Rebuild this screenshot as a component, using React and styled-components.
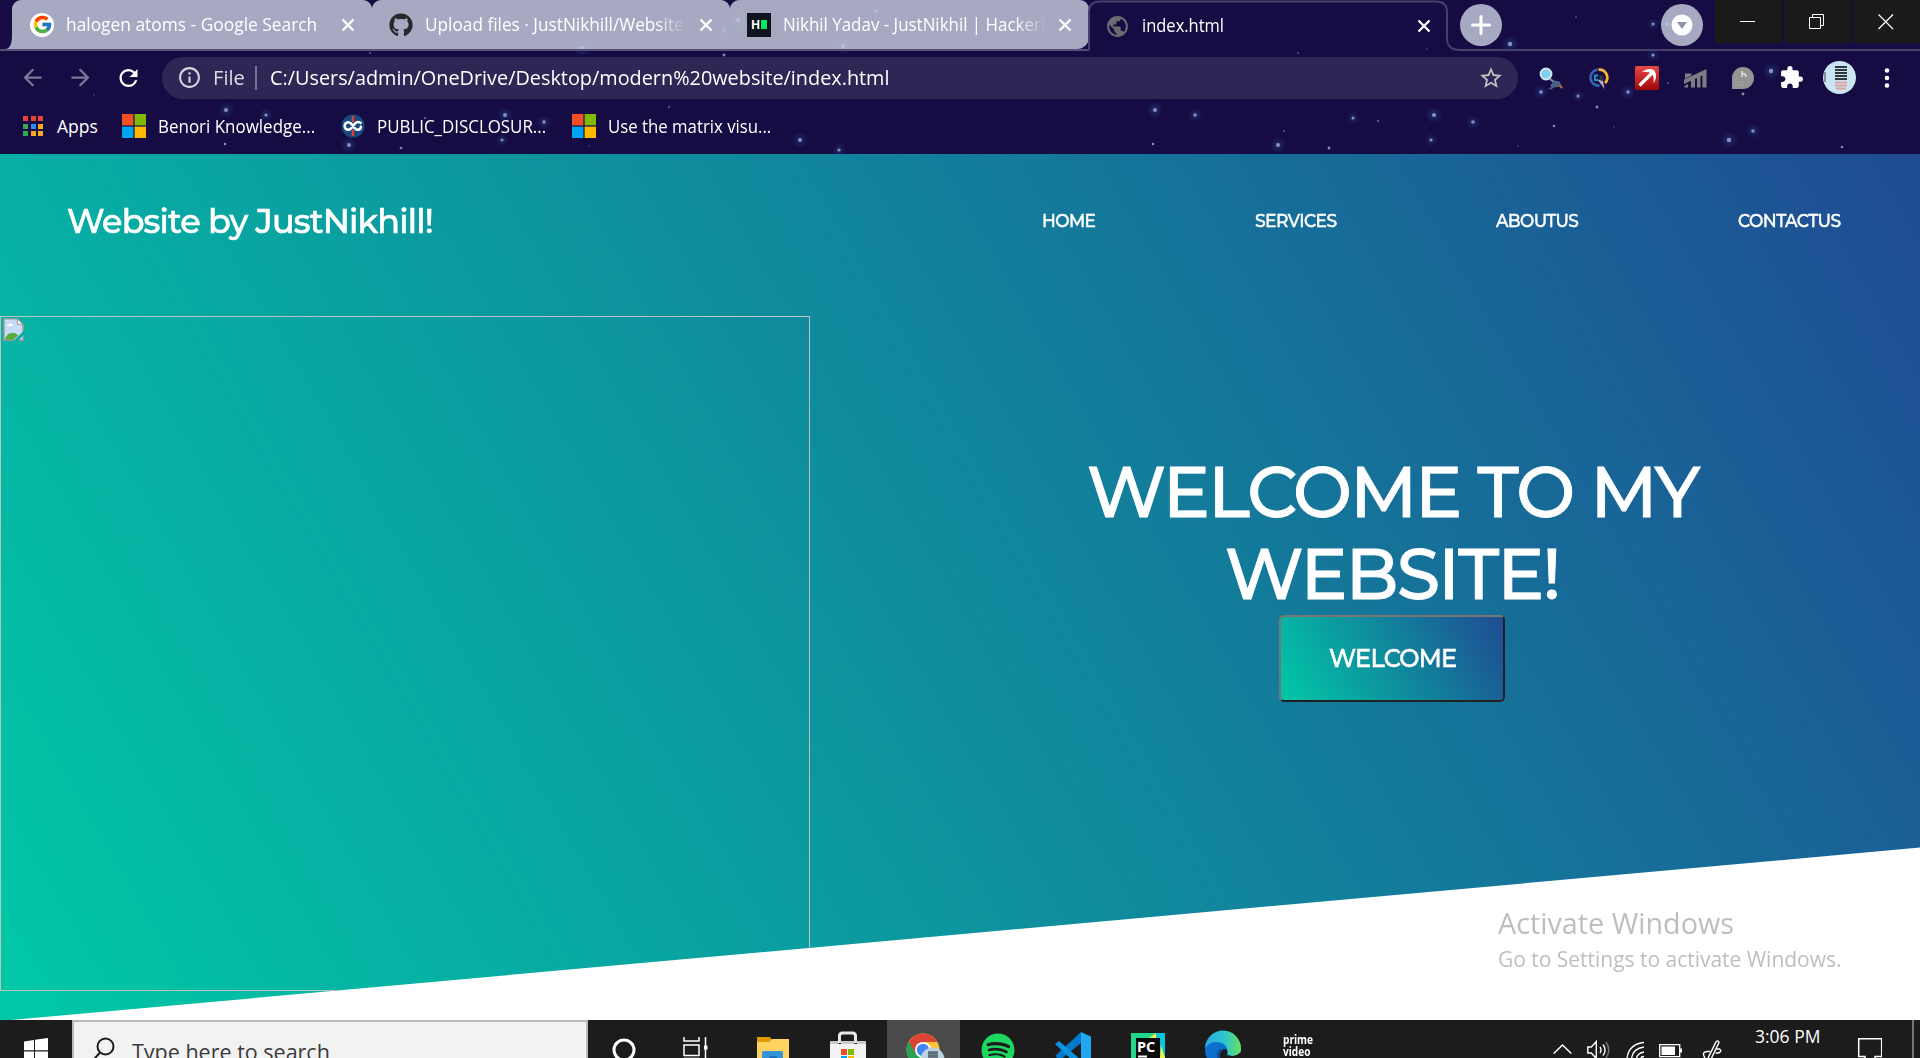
import React, { useLayoutEffect, useRef, useState } from "react";
import styled, { createGlobalStyle } from "styled-components";
import {
  MdArrowBack, MdArrowForward, MdRefresh, MdInfoOutline, MdStarBorder, MdExtension, MdPublic,
} from "react-icons/md";
import { FaGithub, FaSpotify } from "react-icons/fa";
import { FcGoogle } from "react-icons/fc";

const ui = `"Segoe UI", "Open Sans", "Noto Sans", sans-serif`;
const display = `Montserrat, Lato, "Open Sans", sans-serif`;
const brand = "linear-gradient(60deg, #00c9a7, #1f4b93)";

const Global = createGlobalStyle`
  * { box-sizing: border-box; }
  body { margin: 0; background: #fff; font-family: ${ui}; overflow: hidden; }
`;

const Screen = styled.div`
  width: 1920px;
  height: 1058px;
  display: flex;
  flex-direction: column;
  overflow: hidden;
`;

/* Text squeezed or stretched to an exact width */
const FitBox = styled.span`
  display: block;
  flex: none;
  white-space: nowrap;
  font-family: ${(p) => p.$font || ui};
  font-size: ${(p) => p.$size}px;
  font-weight: ${(p) => p.$weight || 400};
  line-height: ${(p) => p.$line || p.$size * 1.3}px;
  letter-spacing: ${(p) => p.$track || 0}em;
  color: ${(p) => p.$color || "#fff"};
  margin-top: ${(p) => p.$drop || 0}px;
  -webkit-text-stroke: ${(p) => p.$stroke || 0}px currentColor;
`;
const FitInner = styled.span`
  display: inline-block;
  transform-origin: 0 50%;
`;
function Fit({ width, children, ...rest }) {
  const ref = useRef(null);
  const [scale, setScale] = useState(1);
  useLayoutEffect(() => {
    const measure = () => ref.current && setScale(width / ref.current.offsetWidth);
    measure();
    document.fonts?.ready.then(measure);
  }, [width]);
  return (
    <FitBox {...rest} style={{ width }}>
      <FitInner ref={ref} style={{ transform: `scaleX(${scale})` }}>{children}</FitInner>
    </FitBox>
  );
}

/* ---------- Browser frame ---------- */
const Browser = styled.header`
  position: relative;
  height: 154px;
  flex: none;
  background: #160c43;
  isolation: isolate;
`;
const Sky = styled.svg`
  position: absolute;
  inset: 0;
  z-index: -1;
`;
const stars = [
  [226, 110, 2], [266, 115, 1.6], [94, 95, 0.8], [225, 144, 1.3], [349, 145, 2], [401, 148, 1.3], [505, 115, 2],
  [544, 122, 1.7], [502, 140, 1.5], [425, 118, 1.2], [589, 146, 0.8], [370, 53, 1], [582, 48, 2], [738, 20, 2],
  [724, 30, 1.6], [876, 11, 1.6], [916, 11, 1.1], [843, 46, 2], [724, 55, 1.4], [669, 107, 1.2], [800, 140, 2],
  [839, 150, 1.6], [1155, 110, 2], [1195, 115, 1.7], [1153, 144, 1.3], [1278, 145, 2], [1284, 131, 1.1],
  [1353, 118, 1.5], [1378, 121, 1.2], [1434, 115, 2.1], [1473, 122, 1.8], [1431, 140, 1.6], [1329, 148, 1.4],
  [1554, 126, 1.3], [1614, 127, 0.8], [1518, 146, 0.8], [1842, 147, 1.3], [1753, 131, 1.8], [1729, 140, 2.2],
  [1771, 71, 2.2], [1743, 94, 1.4], [1628, 92, 1.8], [1597, 107, 1.4], [1578, 96, 1.5], [1541, 92, 1.8],
  [1510, 44, 2.2], [1576, 17, 0.9], [1653, 24, 1.5], [1667, 24, 2], [1653, 55, 1.6], [1668, 83, 1], [1298, 53, 0.9],
  [1427, 49, 0.8],
];

const TabStrip = styled.div`
  height: 51px;
  display: flex;
  align-items: stretch;
`;
const TabGroup = styled.div`
  display: flex;
  width: 1089px;
  padding-left: 12px;
  border-bottom: 2px solid #56507a;
`;
const Tab = styled.div`
  position: relative;
  display: flex;
  align-items: center;
  width: ${(p) => p.$w}px;
  padding: 0 16px 0 ${(p) => p.$pad}px;
  background: rgba(191, 196, 215, 0.86);
  border-radius: 9px 9px ${(p) => (p.$last ? 12 : 0)}px 0;
  & + &::before {
    content: "";
    position: absolute;
    left: -1px;
    top: 11px;
    width: 2px;
    height: 30px;
    background: #fff;
  }
`;
const Flare = styled.svg`
  position: absolute;
  left: -7px;
  bottom: 0;
`;
const ActiveTab = styled.div`
  position: relative;
  width: 371px;
  display: flex;
  align-items: center;
  padding-left: 16px;
`;
const Outline = styled.svg`
  position: absolute;
  left: -1px;
  top: 0;
`;
const StripTail = styled.div`
  flex: 1;
  display: flex;
  border-bottom: 2px solid #46406c;
`;
const Favicon = styled.span`
  display: grid;
  place-items: center;
  flex: none;
  width: 24px;
  height: 24px;
  margin-right: ${(p) => p.$gap}px;
  border-radius: ${(p) => (p.$square ? 0 : "50%")};
  background: ${(p) => p.$bg || "transparent"};
`;
const HackerMark = styled.span`
  display: flex;
  align-items: center;
  gap: 1px;
  font: 900 12px/1 "Liberation Sans", sans-serif;
  color: #fff;
  &::after {
    content: "";
    width: 6px;
    height: 9px;
    background: #00ea64;
  }
`;
const TabTitle = styled.div`
  width: ${(p) => p.$w}px;
  overflow: hidden;
  flex: none;
  ${(p) => p.$fade && "mask-image: linear-gradient(90deg, #000 88%, transparent 100%);"}
`;
const CloseIcon = styled.svg`
  margin-left: auto;
  flex: none;
  width: 16px;
  margin-right: ${(p) => p.$right || 0}px;
`;
const RoundButton = styled.button`
  display: grid;
  place-items: center;
  flex: none;
  width: 42px;
  height: 42px;
  margin: 4px ${(p) => p.$right || 0}px 0 0;
  padding: 0;
  border: 0;
  border-radius: 50%;
  background: rgba(191, 196, 215, 0.86);
`;
const WindowButtons = styled.div`
  display: flex;
  gap: 2px;
  height: 43px;
`;
const WindowButton = styled.div`
  display: grid;
  place-items: center;
  width: 67px;
  padding-right: 1px;
  background: #1a1a1a;
`;

const Toolbar = styled.div`
  height: 53px;
  display: flex;
  align-items: center;
  padding-left: 19px;
`;
const NavIcon = styled.span`
  display: flex;
  width: 27px;
  margin-right: ${(p) => p.$gap}px;
  color: ${(p) => (p.$on ? "#fff" : "#7d7798")};
`;
const Omnibox = styled.div`
  width: 1356px;
  height: 42px;
  display: flex;
  align-items: center;
  padding: 0 14px 0 15px;
  margin-right: 21px;
  border-radius: 21px;
  background: #2e2655;
  color: #d8d6e2;
`;
const Scheme = styled.span`
  margin-left: 11px;
`;
const Divider = styled.span`
  width: 2px;
  height: 24px;
  margin: 0 13px 0 10px;
  background: #77728f;
`;
const Push = styled.span`
  margin-left: auto;
  display: flex;
`;
const Extensions = styled.div`
  display: flex;
  align-items: center;
  gap: 24px;
`;
const Profile = styled.svg`
  margin: 0 0 0 -5px;
`;
const Bookmarks = styled.nav`
  height: 50px;
  display: flex;
  align-items: center;
  padding-left: 23px;
  padding-bottom: 6px;
`;
const Bookmark = styled.a`
  display: flex;
  align-items: center;
  gap: ${(p) => p.$gap || 12}px;
  margin-right: ${(p) => p.$right}px;
`;
const AppsGrid = styled.span`
  display: grid;
  grid-template-columns: repeat(3, 5px);
  gap: 2.5px;
  i { width: 5px; height: 5px; }
`;
const Dot = styled.i`
  background: ${(p) => p.$c};
`;

const Cross = ({ right }) => (
  <CloseIcon $right={right} viewBox="0 0 16 16">
    <path d="M2.500 2.500l11 11M13.500 2.500l-11 11" stroke="#fff" strokeWidth="2.300" />
  </CloseIcon>
);
const MsLogo = () => (
  <svg width="24" height="24">
    <path fill="#f25022" d="M0 0h11.4v11.4H0z" /><path fill="#7fba00" d="M12.6 0H24v11.4H12.6z" />
    <path fill="#00a4ef" d="M0 12.6h11.4V24H0z" /><path fill="#ffb900" d="M12.6 12.6H24V24H12.6z" />
  </svg>
);

function BrowserFrame() {
  return (
    <Browser>
      <Sky width="1920" height="154">
        <defs>
          <radialGradient id="glow">
            <stop offset="0" stopColor="#2f5bab" stopOpacity=".4" />
            <stop offset="1" stopColor="#2553a0" stopOpacity="0" />
          </radialGradient>
        </defs>
        {stars.map(([x, y, r], i) => (
          <g key={i}>
            {r > 1.4 && <circle cx={x} cy={y} r={r * 4.2} fill="url(#glow)" />}
            <circle cx={x} cy={y} r={r} fill="#a7aad6" opacity={r < 1.3 ? 0.45 : 0.78} />
          </g>
        ))}
      </Sky>
      <TabStrip>
        <TabGroup>
          <Tab $w={360} $pad={18}>
            <Flare width="7" height="14"><path d="M7 0Q7 14 0 14H7Z" fill="#a7abc0" /></Flare>
            <Favicon $gap={12} $bg="#fff"><FcGoogle size={21} /></Favicon>
            <TabTitle $w={252}><Fit $size={17.5} width={251}>halogen atoms - Google Search</Fit></TabTitle>
            <Cross />
          </Tab>
          <Tab $w={358} $pad={17}>
            <Favicon $gap={12}><FaGithub size={24} color="#24292e" /></Favicon>
            <TabTitle $w={262} $fade><Fit $size={17.5} width={264}>Upload files · JustNikhill/Website-</Fit></TabTitle>
            <Cross />
          </Tab>
          <Tab $w={359} $pad={17} $last>
            <Favicon $gap={12} $square $bg="#0e141e"><HackerMark>H</HackerMark></Favicon>
            <TabTitle $w={264} $fade><Fit $size={17.5} width={268}>Nikhil Yadav - JustNikhil | HackerR</Fit></TabTitle>
            <Cross />
          </Tab>
        </TabGroup>
        <ActiveTab>
          <Outline width="374" height="51">
            <path d="M1 50V12Q1 1.5 12 1.5H348Q359 1.5 359 12V38Q359 50 372 50" fill="none" stroke="#46406c" strokeWidth="2" />
          </Outline>
          <Favicon $gap={13}><MdPublic size={25} color="#6a6b70" /></Favicon>
          <Fit $size={17.5} width={82}>index.html</Fit>
          <Cross right={28} />
        </ActiveTab>
        <StripTail>
          <RoundButton $right={159}>
            <svg width="20" height="22"><path d="M10 2.500v17M1.500 11h17" stroke="#fff" strokeWidth="3" strokeLinecap="round" /></svg>
          </RoundButton>
          <RoundButton $right={12}>
            <svg width="22" height="22"><circle cx="11" cy="11" r="10.5" fill="#fff" /><path d="M6 8h10l-5 7z" fill="#8f91aa" /></svg>
          </RoundButton>
          <WindowButtons>
            <WindowButton><svg width="16" height="16"><path d="M0 7.5h15" stroke="#fff" /></svg></WindowButton>
            <WindowButton>
              <svg width="16" height="16"><path d="M.5 3.5h11v11H.5zM3.5 3.5v-3h11v11h-3" fill="none" stroke="#fff" /></svg>
            </WindowButton>
            <WindowButton><svg width="16" height="16"><path d="M.5.5l14.500 14.500M15 .5L.5 15" stroke="#fff" strokeWidth="1.2" /></svg></WindowButton>
          </WindowButtons>
        </StripTail>
      </TabStrip>

      <Toolbar>
        <NavIcon $gap={21}><MdArrowBack size={29} /></NavIcon>
        <NavIcon $gap={21}><MdArrowForward size={29} /></NavIcon>
        <NavIcon $gap={20} $on><MdRefresh size={30} /></NavIcon>
        <Omnibox>
          <MdInfoOutline size={25} />
          <Scheme><Fit $size={19.5} width={32} $color="#dddbe6">File</Fit></Scheme>
          <Divider />
          <Fit $size={20} width={620}>C:/Users/admin/OneDrive/Desktop/modern%20website/index.html</Fit>
          <Push><MdStarBorder size={26} color="#c5c1c4" /></Push>
        </Omnibox>
        <Extensions>
          <svg width="24" height="24">
            <path d="M10.500 12.500l5 4" stroke="#7c8fa8" strokeWidth="2" />
            <path d="M9 23l3-2-.5-2 4-4.500 5 1 2 4-4 1.500-4 .5-2 2z" fill="#4a5f86" />
            <circle cx="7" cy="8" r="5.500" fill="#7fd0f0" stroke="#d2e6ee" strokeWidth="1.800" /><path d="M20.500 19l2.500 3" stroke="#b5663a" strokeWidth="2.200" />
          </svg>
          <svg width="24" height="24">
            <path d="M10.500 3.700a8 8 0 0 0 2 15.900" fill="none" stroke="#3561ad" strokeWidth="2.800" />
            <path d="M11.500 3.600a8 8 0 0 1 6.500 13.500" fill="none" stroke="#f4b532" strokeWidth="2.800" />
            <path d="M11 9.500H8v4.500h3" fill="none" stroke="#159bd8" strokeWidth="1.800" /><path d="M12.500 9.500l3.500 4.500M16 9.500l-3.500 4.500" stroke="#3a3b4c" strokeWidth="1.500" />
            <path d="M10.500 13.500l7 9.500-1.500-8z" fill="#b4b2c0" />
          </svg>
          <svg width="24" height="24">
            <defs><linearGradient id="pick" x2="0" y2="1"><stop stopColor="#e8494a" /><stop offset="1" stopColor="#a00606" /></linearGradient></defs>
            <rect width="24" height="24" rx="1.500" fill="url(#pick)" /><path d="M4.500 19.500L17 7" stroke="#fff" strokeWidth="3.200" />
            <path d="M7 6Q13 1 19.500 4.500Q23 11 18.500 17.500Q19.500 10 16.500 7.500Q13 5 7 6Z" fill="#fff" />
          </svg>
          <svg width="24" height="24" fill="#7c7c82">
            <path d="M1 13.500L23.500 3v4.500L1 18zM1.500 20l3.500-2v3.500H1.500zM8 14.500l4-2v9H8zM14 11.500l3.500-1.500v11.500H14zM19.500 9l4-2v14.500h-4zM2 7.500h6.500v2L2 12.500z" />
          </svg>
          <svg width="24" height="24">
            <path d="M1 23V12A11 11 0 1 1 12 23Z" fill="#949494" /><path d="M11 5v6M11 8q4-1 4 3" stroke="#ddd" strokeWidth="1.600" fill="none" />
            <path d="M3 13h4M3 16h4M3 19h9M9 16h5" stroke="#a2a2a2" />
          </svg>
          <MdExtension size={25} color="#fff" />
          <Profile width="33" height="33">
            <circle cx="16.500" cy="16.500" r="16.500" fill="#cbe4f3" />
            <path d="M12 6h12M12 9h12M12 12h12M12 15h12M12 18h12" stroke="#30373d" strokeWidth="2" />
            <path d="M12 21.500h12M12 24.500h12M13 27.500h10" stroke="#dba39c" strokeWidth="1.800" /><path d="M2 11v10" stroke="#6b7680" strokeWidth="1.500" />
          </Profile>
          <svg width="14" height="20" fill="#fff"><circle cx="7" cy="2.500" r="2.300" /><circle cx="7" cy="10" r="2.300" /><circle cx="7" cy="17.500" r="2.300" /></svg>
        </Extensions>
      </Toolbar>

      <Bookmarks>
        <Bookmark $gap={14} $right={24}>
          <AppsGrid>
            {["#ea4335", "#ea4335", "#ea4335", "#34a853", "#2a8cf0", "#fbab17", "#34a853", "#fbab17", "#fbab17"].map((c, i) => <Dot key={i} $c={c} />)}
          </AppsGrid>
          <Fit $size={17.5} width={41}>Apps</Fit>
        </Bookmark>
        <Bookmark $right={26}><MsLogo /><Fit $size={17.5} width={157}>Benori Knowledge...</Fit></Bookmark>
        <Bookmark $right={26}>
          <svg width="24" height="24">
            <circle cx="12" cy="12" r="11.500" fill="#174a7c" /><path d="M12 2v6M12 16v6" stroke="#e33b3b" strokeWidth="2.500" />
            <path d="M20.500 9.500Q17 6.500 14 9.500L10 14.500Q7 17 4.500 14.500 2.800 12 4.500 9.500 7 7 10 9.500L14 14.500Q17 17 19.500 14.500 20.500 13 19 12" fill="none" stroke="#fff" strokeWidth="2.500" />
          </svg>
          <Fit $size={17.5} width={169}>PUBLIC_DISCLOSUR...</Fit>
        </Bookmark>
        <Bookmark $right={0}><MsLogo /><Fit $size={17.5} width={163}>Use the matrix visu...</Fit></Bookmark>
      </Bookmarks>
    </Browser>
  );
}

/* ---------- Web page ---------- */
const Page = styled.main`
  position: relative;
  height: 866px;
  flex: none;
  overflow: hidden;
  background: #fff;
`;
const Landing = styled.section`
  height: 867px;
  background: ${brand};
  clip-path: polygon(0 0, 100% 0, 100% 80%, 0 100%);
`;
const SiteHeader = styled.div`
  height: 162px;
  display: flex;
  align-items: center;
  justify-content: space-between;
  padding: 0 80px 28px 67px;
`;
const Menu = styled.div`
  display: flex;
  gap: 160px;
`;
const Hero = styled.div`
  display: flex;
`;
const MissingImage = styled.div`
  width: 810px;
  height: 675px;
  border: 1px solid #c0c0c0;
  padding: 1px 2px;
`;
const Copy = styled.div`
  flex: 1;
  display: flex;
  flex-direction: column;
  align-items: center;
  padding: 135px 0 0 54px;
`;
const WelcomeButton = styled.button`
  width: 226px;
  height: 87px;
  display: grid;
  place-items: center;
  padding: 0;
  border: 2px solid;
  border-color: #767676 #212121 #212121 #767676;
  border-radius: 5px;
  background: ${brand};
`;
const Watermark = styled.aside`
  position: absolute;
  left: 1498px;
  top: 750px;
`;

function WebPage() {
  return (
    <Page>
      <Landing>
        <SiteHeader>
          <Fit $font={display} $size={34} $weight={500} $stroke={0.6} $track={-0.025} width={366}>Website by JustNikhill!</Fit>
          <Menu>
            {[["HOME", 53], ["SERVICES", 81], ["ABOUTUS", 82], ["CONTACTUS", 102]].map(([t, w]) => (
              <Fit key={t} $font={display} $size={18} $weight={500} $stroke={0.4} $track={-0.035} $drop={1} width={w}>{t}</Fit>
            ))}
          </Menu>
        </SiteHeader>
        <Hero>
          <MissingImage>
            <svg width="21" height="24" viewBox="0 0 22 27" preserveAspectRatio="none">
              <path d="M1 1h14l6 6v18H1z" fill="#c6dbf7" stroke="#9a9a9a" strokeWidth="1.500" /><path d="M15 1v6h6z" fill="#fff" stroke="#8c8c8c" />
              <path d="M4 9q0-2 2-2 1-2 3 0 2 0 2 2z" fill="#fff" /><path d="M2 24.500q2-8 8-8 4 0 6 3l-5 5z" fill="#57ab3b" />
              <path d="M11 26L22 14v4l-6 8z" fill="#06aca5" />
            </svg>
          </MissingImage>
          <Copy>
            <Fit $font={display} $size={71} $line={82} $weight={500} $stroke={0.9} $track={-0.025} width={611}>WELCOME TO MY</Fit>
            <Fit $font={display} $size={71} $line={82} $weight={500} $stroke={0.9} $track={-0.025} width={334}>WEBSITE!</Fit>
            <WelcomeButton><Fit $font={display} $size={25} $weight={500} $stroke={0.5} $track={-0.03} width={127}>WELCOME</Fit></WelcomeButton>
          </Copy>
        </Hero>
      </Landing>
      <Watermark>
        <Fit $size={29} $line={38} width={236} $color="#bebebe">Activate Windows</Fit>
        <Fit $size={22} $line={32} width={343} $color="#bebebe">Go to Settings to activate Windows.</Fit>
      </Watermark>
    </Page>
  );
}

/* ---------- Taskbar ---------- */
const Taskbar = styled.footer`
  height: 38px;
  flex: none;
  display: flex;
  overflow: hidden;
  background: #1c1c1c;
`;
const Start = styled.div`
  width: 72px;
  padding: 18px 24px 0;
`;
const Search = styled.div`
  width: 516px;
  height: 60px;
  display: flex;
  flex: none;
  align-items: flex-start;
  padding: 15px 0 0 18px;
  gap: 16px;
  border: 2px solid #b9b9b9;
  background: #f2f2f2;
`;
const AppSlot = styled.div`
  position: relative;
  width: ${(p) => p.$w || 75}px;
  height: 38px;
  flex: none;
  display: flex;
  justify-content: center;
  padding-right: ${(p) => p.$nudge || 0}px;
  margin-left: ${(p) => (p.$active ? 2 : 0)}px;
  background: ${(p) => (p.$active ? "#4a4a4a" : "transparent")};
`;
const PushedDown = styled.span`
  padding-top: 13px;
  height: 60px;
`;
const PrimeText = styled.div`
  padding-top: 14px;
`;
const Tray = styled.div`
  margin-left: auto;
  display: flex;
  align-items: flex-start;
`;
const TrayIcon = styled.svg`
  margin-right: ${(p) => p.$right}px;
`;
const ShowDesktop = styled.div`
  width: 8px;
  height: 38px;
  border-left: 2px solid #747474;
`;
const PcLabel = styled.span`
  position: absolute;
  left: 27px;
  top: 20px;
  font: 700 14.5px/14px "Open Sans", sans-serif;
  color: #fff;
`;

function WindowsTaskbar() {
  return (
    <Taskbar>
      <Start>
        <svg width="24" height="24" fill="#fff"><path d="M0 3.400L10 2v10.300H0zM11 1.800L24 0v12.300H11zM0 13.500h10V23L0 22zM11 13.500h13V24l-13-1.500z" /></svg>
      </Start>
      <Search>
        <svg width="24" height="28"><circle cx="13.500" cy="9.500" r="8" fill="none" stroke="#1c1c1c" strokeWidth="2" /><path d="M8 15.500L0 24.500" stroke="#1c1c1c" strokeWidth="2" /></svg>
        <Fit $size={21.500} $line={28} $drop={1} width={198} $color="#3a3a3a">Type here to search</Fit>
      </Search>
      <AppSlot $w={72}><svg width="30" height="38"><circle cx="15" cy="30" r="10" fill="none" stroke="#fff" strokeWidth="3" /></svg></AppSlot>
      <AppSlot $nudge={4}>
        <svg width="25" height="38" fill="none" stroke="#fff" strokeWidth="1.500">
          <path d="M1 17v4h15v-4M1 25h15v10.500H1zM1 38.500h15M22.500 17v23" /><path d="M21 25.500h3.500v4H21z" fill="#fff" stroke="none" />
        </svg>
      </AppSlot>
      <AppSlot>
        <svg width="32" height="38"><path d="M0 19V17h13l2 3v4H0z" fill="#df9c00" /><path d="M0 22h12l3-3h17v19H0z" fill="#ffd360" /><path d="M5 38v-5q0-2 2-2h17q2 0 2 2v5z" fill="#3692db" /><path d="M12 38q0-2 4-2t4 2z" fill="#1a6ab1" /></svg>
      </AppSlot>
      <AppSlot>
        <svg width="36" height="38"><path d="M9.500 23v-7q0-3 3-3h10q3 0 3 3v7" fill="none" stroke="#e9e9e9" strokeWidth="3" /><path d="M0 21h8.500v3h18.500v-3H36v17H0z" fill="#f3f3f3" /><path d="M0 21h8v3H0zM11 21h13.500v3H11zM27 21h9v3h-9z" fill="#c9c9c9" /><path d="M11 29h6v6h-6z" fill="#f25022" /><path d="M18 29h6v6h-6z" fill="#7fba00" /><path d="M11 36h6v2h-6z" fill="#00a4ef" /><path d="M18 36h6v2h-6z" fill="#ffb900" /></svg>
      </AppSlot>
      <AppSlot $active $w={73}>
        <svg width="48" height="38">
          <circle cx="23" cy="30" r="16.500" fill="#fdc43b" /><path d="M23 30L8.500 22A16.500 16.500 0 0 0 17 45.500z" fill="#2aa052" />
          <path d="M23 22H37.500A16.500 16.500 0 0 0 9 21.500L16 34z" fill="#db4437" />
          <circle cx="23" cy="30" r="8" fill="#fff" /><circle cx="23" cy="30" r="6.200" fill="#4285f4" />
          <circle cx="32.500" cy="39.500" r="12" fill="#bcd3e2" /><path d="M28 31h10v7H28z" fill="#71808c" /><path d="M28 33h10M28 36h10" stroke="#4c5a66" />
        </svg>
      </AppSlot>
      <AppSlot><PushedDown><FaSpotify size={34} color="#1ed760" /></PushedDown></AppSlot>
      <AppSlot>
        <svg width="36" height="38"><path d="M26 12l10 4.500V38H26z" fill="#22a7f2" /><path d="M26 12v11L5 40 0 36z" fill="#0079ca" /><path d="M0 24l4-3 22 19H17z" fill="#0b93de" /></svg>
      </AppSlot>
      <AppSlot>
        <svg width="34" height="38"><path d="M0 13h34v25H0z" fill="#21d789" /><path d="M25 13h9v25h-9z" fill="#08c4dd" /><path d="M18 18l7-5v5zM29 38l1-13 4 13z" fill="#eef245" /><path d="M5 18h24v20H5z" fill="#0a0a0a" /><path d="M7 36.500h9" stroke="#fff" strokeWidth="2" /></svg>
        <PcLabel>PC</PcLabel>
      </AppSlot>
      <AppSlot>
        <svg width="36" height="38">
          <defs><linearGradient id="edge"><stop stopColor="#2aa9e0" /><stop offset=".55" stopColor="#2fc6cf" /><stop offset="1" stopColor="#67e05a" /></linearGradient></defs>
          <circle cx="18" cy="30" r="18" fill="#0b70cc" /><path d="M0 28A18 18 0 0 1 36 29q0 7-8 7-6 0-5-3Q22 22 11 22 4 22 0 28z" fill="url(#edge)" />
          <path d="M23 38q-2-2-1-5 1-6-5-3-5 3-3 8z" fill="#1c1c1c" /><path d="M23 35q6 3 13-3v6H22z" fill="#1c1c1c" />
          <path d="M14 38q-2-5 2-8" fill="none" stroke="#0c4f9d" strokeWidth="3" />
        </svg>
      </AppSlot>
      <AppSlot>
        <PrimeText>
          <Fit $size={12.500} $line={11.500} $weight={700} width={30}>prime<br />video</Fit>
        </PrimeText>
      </AppSlot>
      <Tray>
        <TrayIcon $right={15} width="19" height="38"><path d="M.7 33.500L9.500 25l8.800 8.500" fill="none" stroke="#fff" strokeWidth="1.500" /></TrayIcon>
        <TrayIcon $right={16} width="23" height="38" fill="none" stroke="#fff" strokeWidth="1.400">
          <path d="M.8 27h3.500l5-5.500v17l-5-5.500H.8zM13 27q2 3 0 6M16 24.500q4 5.500 0 11" /><path d="M19 22q5.500 8 0 16" stroke="#777" />
        </TrayIcon>
        <TrayIcon $right={15} width="18" height="38" fill="none" stroke="#fff" strokeWidth="1.300">
          <path d="M18 22.500Q3 24 1 38M18 27Q7 28.500 5.500 38M18 32q-6 1-7.500 6" /><path d="M18 36.500q-3 0-3 2" />
        </TrayIcon>
        <TrayIcon $right={20} width="23" height="38"><path d="M.7 24.700h20v12H.7z" fill="none" stroke="#fff" strokeWidth="1.300" /><path d="M2.500 26.500H16v8.500H2.500zM21 28.500h2v4h-2z" fill="#fff" /></TrayIcon>
        <TrayIcon $right={33} width="20" height="38" fill="none" stroke="#fff" strokeWidth="1.400">
          <path d="M6 38l8-16q2-2.500 3 .5l-7.500 15.500M3 38q-4-6 2-6.500h3M13.500 29h4q3 2-1 4h-3" />
        </TrayIcon>
        <Fit $size={17.500} $line={24} $drop={4} width={65}>3:06 PM</Fit>
        <TrayIcon $right={30} width="62" height="38" fill="none" stroke="#fff" strokeWidth="1.500"><path d="M45 38v-1.500h-6.300V18.700h23v17.800H55V38M47 38q1 2 3 2" /></TrayIcon>
        <ShowDesktop />
      </Tray>
    </Taskbar>
  );
}

export default function App() {
  return (
    <Screen>
      <Global />
      <BrowserFrame />
      <WebPage />
      <WindowsTaskbar />
    </Screen>
  );
}
